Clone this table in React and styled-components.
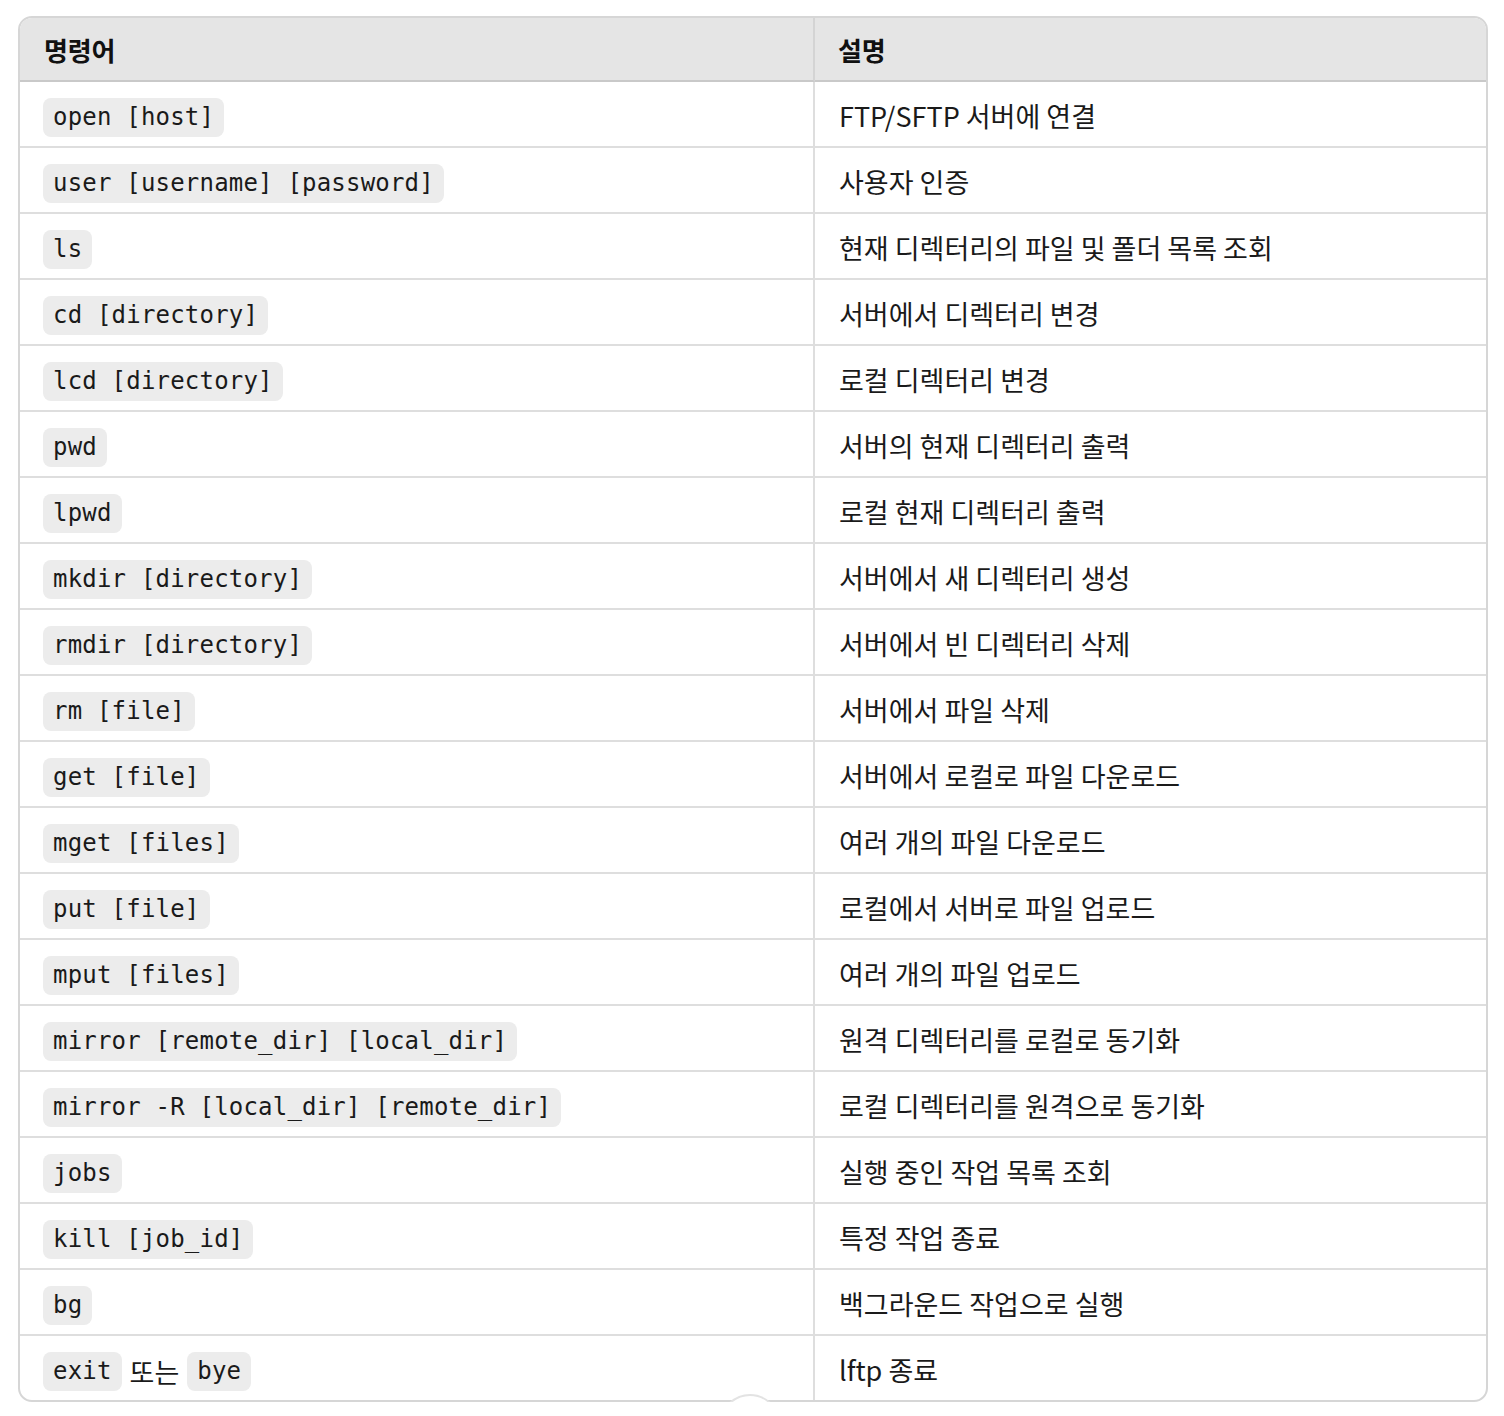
import React from "react";
import styled, { createGlobalStyle } from "styled-components";
import { ArrowDown } from "lucide-react";

const Global = createGlobalStyle`
  html, body { margin: 0; padding: 0; background: #ffffff; }
  body { font-family: "Noto Sans CJK KR", "Noto Sans", sans-serif; color: #1a1a1a; }
`;

const Page = styled.div`
  padding: 16px 16px 0 18px;
`;

const Frame = styled.div`
  position: relative;
`;

const TableBox = styled.div`
  border: 2px solid #d6d6d6;
  border-radius: 14px;
  overflow: hidden;
`;

const Table = styled.table`
  width: 100%;
  border-collapse: separate;
  border-spacing: 0;
  table-layout: fixed;
`;

const Col = styled.col`
  width: ${(p) => p.$w || "auto"};
`;

const Th = styled.th`
  box-sizing: border-box;
  height: 64px;
  background: #e5e5e5;
  border-bottom: 2px solid #c9c9c9;
  border-right: ${(p) => (p.$first ? "2px solid #d4d4d4" : "none")};
  text-align: left;
  padding: 0 0 0 ${(p) => (p.$first ? "24px" : "23px")};
  font-size: 26px;
  font-weight: 600;
  letter-spacing: -0.2px;
  color: #111;
`;

const Td = styled.td`
  box-sizing: border-box;
  height: ${(p) => (p.$last ? "64px" : "66px")};
  padding: 0 0 0 ${(p) => (p.$first ? "23px" : "24px")};
  border-bottom: ${(p) => (p.$last ? "none" : "2px solid #dedede")};
  border-right: ${(p) => (p.$first ? "2px solid #dedede" : "none")};
  font-size: 27px;
  color: #1a1a1a;
  vertical-align: middle;
`;

const Desc = styled.span`
  position: relative;
  top: 1px;
`;

const Code = styled.code`
  display: inline-block;
  font-family: "DejaVu Sans Mono", "Liberation Mono", monospace;
  font-size: 24px;
  letter-spacing: 0.2px;
  line-height: 39px;
  height: 39px;
  padding: 0 10px;
  margin-top: 6px;
  border-radius: 8px;
  background: #ececec;
  color: #1a1a1a;
  white-space: pre;
  vertical-align: middle;
`;

const Joiner = styled.span`
  margin: 0 8px;
  font-size: 27px;
  vertical-align: middle;
  position: relative;
  top: 3px;
`;

const ScrollButton = styled.button`
  position: absolute;
  left: 702px;
  top: 1378px;
  width: 60px;
  height: 60px;
  border-radius: 50%;
  background: #ffffff;
  border: 2px solid #e3e3e3;
  display: flex;
  align-items: center;
  justify-content: center;
  padding: 0 0 8px 0;
  color: #111;
`;

const rows = [
  [["open [host]"], "FTP/SFTP 서버에 연결"],
  [["user [username] [password]"], "사용자 인증"],
  [["ls"], "현재 디렉터리의 파일 및 폴더 목록 조회"],
  [["cd [directory]"], "서버에서 디렉터리 변경"],
  [["lcd [directory]"], "로컬 디렉터리 변경"],
  [["pwd"], "서버의 현재 디렉터리 출력"],
  [["lpwd"], "로컬 현재 디렉터리 출력"],
  [["mkdir [directory]"], "서버에서 새 디렉터리 생성"],
  [["rmdir [directory]"], "서버에서 빈 디렉터리 삭제"],
  [["rm [file]"], "서버에서 파일 삭제"],
  [["get [file]"], "서버에서 로컬로 파일 다운로드"],
  [["mget [files]"], "여러 개의 파일 다운로드"],
  [["put [file]"], "로컬에서 서버로 파일 업로드"],
  [["mput [files]"], "여러 개의 파일 업로드"],
  [["mirror [remote_dir] [local_dir]"], "원격 디렉터리를 로컬로 동기화"],
  [["mirror -R [local_dir] [remote_dir]"], "로컬 디렉터리를 원격으로 동기화"],
  [["jobs"], "실행 중인 작업 목록 조회"],
  [["kill [job_id]"], "특정 작업 종료"],
  [["bg"], "백그라운드 작업으로 실행"],
  [["exit", "bye"], "lftp 종료"],
];

export default function App() {
  return (
    <>
      <Global />
      <Page>
        <Frame>
          <TableBox>
            <Table>
              <colgroup>
                <Col $w="795px" />
                <Col />
              </colgroup>
              <thead>
                <tr>
                  <Th $first>명령어</Th>
                  <Th>설명</Th>
                </tr>
              </thead>
              <tbody>
                {rows.map(([codes, desc], i) => {
                  const last = i === rows.length - 1;
                  return (
                    <tr key={i}>
                      <Td $first $last={last}>
                        {codes.length === 2 ? (
                          <>
                            <Code>{codes[0]}</Code>
                            <Joiner>또는</Joiner>
                            <Code>{codes[1]}</Code>
                          </>
                        ) : (
                          <Code>{codes[0]}</Code>
                        )}
                      </Td>
                      <Td $last={last}>
                        <Desc>{desc}</Desc>
                      </Td>
                    </tr>
                  );
                })}
              </tbody>
            </Table>
          </TableBox>
          <ScrollButton aria-label="scroll down">
            <ArrowDown size={28} strokeWidth={2.4} />
          </ScrollButton>
        </Frame>
      </Page>
    </>
  );
}
